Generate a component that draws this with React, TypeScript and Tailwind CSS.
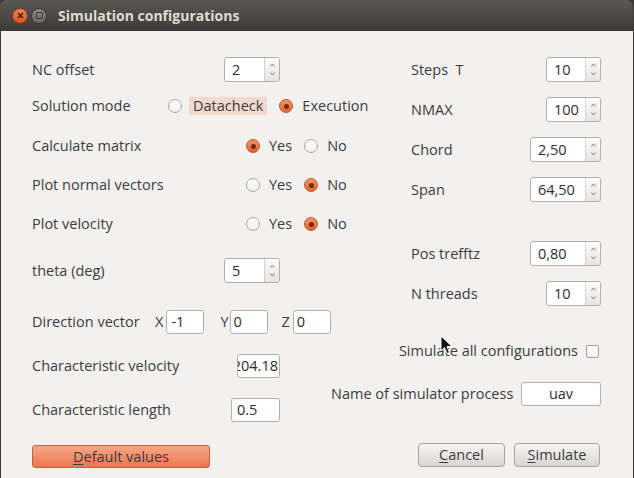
import React from "react";

function Radio({ checked }: { checked?: boolean }) {
  return checked ? (
    <span className="w-[14px] h-[14px] rounded-full border border-[#c0562c] bg-linear-to-b from-[#f6956a] to-[#e4622f] flex items-center justify-center shrink-0">
      <span className="w-[5px] h-[5px] rounded-full bg-[#6e2a14]" />
    </span>
  ) : (
    <span className="w-[14px] h-[14px] rounded-full border border-[#aaa69f] bg-linear-to-b from-white to-[#efeeec] shrink-0" />
  );
}

function Spin({ value, w }: { value: string; w: number }) {
  return (
    <div
      className="h-[25px] flex rounded-[3px] border border-[#b3afa9] bg-white shrink-0 overflow-hidden"
      style={{ width: w }}
    >
      <div className="flex-1 flex items-center pl-[7px] text-[#2e2e2e]">{value}</div>
      <div className="w-[15px] border-l border-[#d4d1cc] bg-linear-to-b from-[#fbfbfa] to-[#e6e4e0] flex flex-col items-center justify-between py-[5px]">
        <svg width="5" height="4" viewBox="0 0 5 4">
          <path d="M0.5 3.5 L2.5 1 L4.5 3.5" stroke="#7a7874" strokeWidth="1" fill="none" />
        </svg>
        <svg width="5" height="4" viewBox="0 0 5 4">
          <path d="M0.5 0.5 L2.5 3 L4.5 0.5" stroke="#7a7874" strokeWidth="1" fill="none" />
        </svg>
      </div>
    </div>
  );
}

function Field({ children, w, cls = "" }: { children: React.ReactNode; w: number; cls?: string }) {
  return (
    <div
      className={"h-[24px] flex items-center rounded-[3px] border border-[#b3afa9] bg-white shrink-0 overflow-hidden text-[#2e2e2e] " + cls}
      style={{ width: w }}
    >
      {children}
    </div>
  );
}

function YesNo({ label, yes }: { label: string; yes: boolean }) {
  return (
    <div className="flex items-center h-[20px]">
      <span className="w-[214px] shrink-0">{label}</span>
      <Radio checked={yes} />
      <span className="ml-[9px]">Yes</span>
      <span className="ml-[12px] flex items-center">
        <Radio checked={!yes} />
        <span className="ml-[9px]">No</span>
      </span>
    </div>
  );
}

function SpinRow({ label, value, w, mt }: { label: string; value: string; w: number; mt: string }) {
  return (
    <div className={"flex items-center justify-between " + mt}>
      <span className="ml-[80px] whitespace-pre">{label}</span>
      <Spin value={value} w={w} />
    </div>
  );
}

export default function App() {
  return (
    <div className="w-[634px] h-[478px] bg-[#3c3b37] font-['Open_Sans',sans-serif] text-[14.5px] text-[#3c3c3c] overflow-hidden">
      <div className="relative w-[633px] h-[478px] flex flex-col">
        {/* Title bar */}
        <div className="h-[31px] shrink-0 rounded-t-[7px] bg-linear-to-b from-[#5a5853] to-[#3c3b37] flex items-center pl-[12px]">
          <span className="w-[16px] h-[16px] rounded-full border border-[#8a3417] bg-linear-to-b from-[#f7854f] to-[#d9521f] flex items-center justify-center">
            <svg width="7" height="7" viewBox="0 0 7 7">
              <path d="M1 1 L6 6 M6 1 L1 6" stroke="#3a1a0c" strokeWidth="1.4" />
            </svg>
          </span>
          <span className="ml-[3px] w-[16px] h-[16px] rounded-full border border-[#3a3935] bg-linear-to-b from-[#8e8c87] to-[#6c6a65] flex items-center justify-center">
            <span className="w-[7px] h-[7px] border border-[#3a3935] rounded-[1px]" />
          </span>
          <span className="ml-[11px] font-bold text-[14px] text-[#dfdbd2]">Simulation configurations</span>
        </div>

        {/* Body */}
        <div className="flex-1 ml-[1px] bg-[#f2f1f0] flex flex-col pl-[31px] pr-[32px] pt-[26px]">
          <div className="flex items-start">
            {/* Left column */}
            <div className="w-[248px] shrink-0 flex flex-col">
              <div className="flex items-center justify-between">
                <span>NC offset</span>
                <Spin value="2" w={56} />
              </div>
              <div className="mt-[14px] h-[20px] flex items-center">
                <span className="w-[136px] shrink-0">Solution mode</span>
                <Radio />
                <span className="ml-[7px] h-[18px] px-[4px] bg-[#f2d9cd] flex items-center whitespace-nowrap">Datacheck</span>
                <span className="ml-[12px]">
                  <Radio checked />
                </span>
                <span className="ml-[9px] whitespace-nowrap">Execution</span>
              </div>
              <div className="mt-[20px]">
                <YesNo label="Calculate matrix" yes={true} />
              </div>
              <div className="mt-[19px]">
                <YesNo label="Plot normal vectors" yes={false} />
              </div>
              <div className="mt-[19px]">
                <YesNo label="Plot velocity" yes={false} />
              </div>
              <div className="mt-[24px] flex items-center justify-between">
                <span>theta (deg)</span>
                <Spin value="5" w={56} />
              </div>
              <div className="mt-[27px] flex items-center">
                <span className="w-[123px] shrink-0 whitespace-nowrap">Direction vector</span>
                <span>X</span>
                <Field w={38} cls="ml-[3px] pl-[4px]">-1</Field>
                <span className="ml-[16px]">Y</span>
                <Field w={38} cls="ml-[1px] pl-[3px]">0</Field>
                <span className="ml-[14px]">Z</span>
                <Field w={38} cls="ml-[3px] pl-[3px]">0</Field>
              </div>
              <div className="mt-[20px] flex items-center justify-between">
                <span className="whitespace-nowrap">Characteristic velocity</span>
                <Field w={43} cls="justify-end pr-[1px]">
                  <span className="whitespace-nowrap">204.18</span>
                </Field>
              </div>
              <div className="mt-[20px] flex items-center justify-between">
                <span className="whitespace-nowrap">Characteristic length</span>
                <Field w={49} cls="pl-[5px]">0.5</Field>
              </div>
            </div>

            {/* Right column */}
            <div className="ml-[51px] flex-1 flex flex-col">
              <SpinRow label="Steps  T" value="10" w={55} mt="" />
              <SpinRow label="NMAX" value="100" w={55} mt="mt-[15px]" />
              <SpinRow label="Chord" value="2,50" w={71} mt="mt-[15px]" />
              <SpinRow label="Span" value="64,50" w={71} mt="mt-[15px]" />
              <SpinRow label="Pos trefftz" value="0,80" w={71} mt="mt-[39px]" />
              <SpinRow label="N threads" value="10" w={55} mt="mt-[15px]" />
              <div className="mt-[35px] h-[20px] flex items-center justify-end">
                <span className="whitespace-nowrap">Simulate all configurations</span>
                <span className="ml-[8px] mr-[2px] w-[13px] h-[13px] rounded-[2px] border border-[#a29f99] bg-linear-to-b from-white to-[#f1f0ee]" />
              </div>
              <div className="mt-[21px] flex items-center justify-between">
                <span className="whitespace-nowrap">Name of simulator process</span>
                <Field w={80} cls="justify-center">uav</Field>
              </div>
            </div>
          </div>

          {/* Buttons */}
          <div className="mt-[21px] flex items-start justify-between">
            <button className="mt-[2px] w-[178px] h-[23px] rounded-[3px] border border-[#c06442] bg-linear-to-b from-[#f7a785] to-[#eb7651] text-[#3c3c3c] flex items-center justify-center">
              <span>
                <span className="underline underline-offset-2">D</span>efault values
              </span>
            </button>
            <div className="flex gap-[9px] mr-[1px]">
              <button className="w-[87px] h-[24px] rounded-[4px] border border-[#a7a49f] bg-linear-to-b from-[#f6f5f4] to-[#d9d6d1] text-[#3c3c3c] flex items-center justify-center">
                <span>
                  <span className="underline underline-offset-2">C</span>ancel
                </span>
              </button>
              <button className="w-[86px] h-[24px] rounded-[4px] border border-[#a7a49f] bg-linear-to-b from-[#f6f5f4] to-[#d9d6d1] text-[#3c3c3c] flex items-center justify-center">
                <span>
                  <span className="underline underline-offset-2">S</span>imulate
                </span>
              </button>
            </div>
          </div>
        </div>

        {/* Mouse cursor overlay */}
        <svg className="absolute left-[440px] top-[335px]" width="14" height="20" viewBox="0 0 14 20">
          <path d="M1 1 L1 16 L4.5 12.5 L7 18.5 L9.5 17.5 L7 11.5 L12 11.5 Z" fill="#111" stroke="#fff" strokeWidth="1" strokeLinejoin="round" />
        </svg>
      </div>
    </div>
  );
}
